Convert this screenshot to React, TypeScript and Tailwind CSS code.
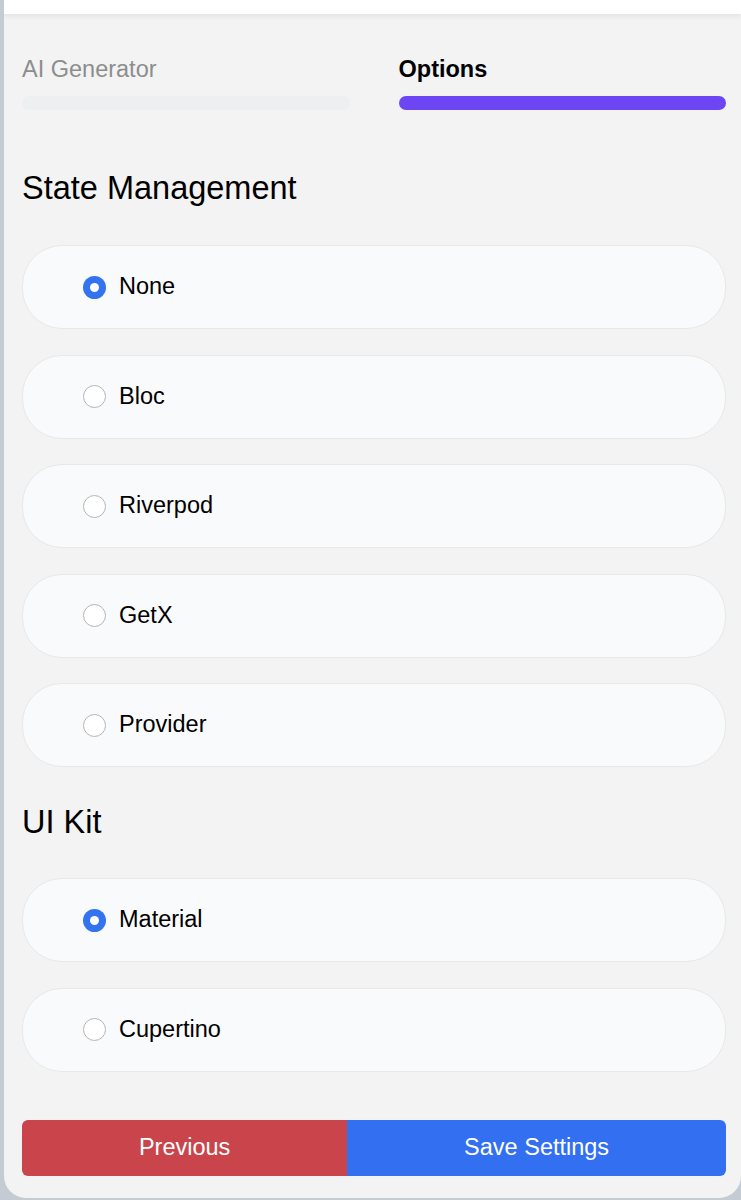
import { useState } from "react";

const stateOptions = ["None", "Bloc", "Riverpod", "GetX", "Provider"];
const uiKits = ["Material", "Cupertino"];

function RadioCard({
  label,
  checked,
  onSelect,
}: {
  label: string;
  checked: boolean;
  onSelect: () => void;
}) {
  return (
    <label
      onClick={onSelect}
      className="flex items-center h-[84px] pl-[60px] bg-[#f9fafb] border border-[#e8e8e9] rounded-[40px] cursor-pointer"
    >
      {checked ? (
        <span className="w-[23px] h-[23px] rounded-full bg-[#3373f0] flex items-center justify-center">
          <span className="w-[9px] h-[9px] rounded-full bg-white" />
        </span>
      ) : (
        <span className="w-[23px] h-[23px] rounded-full bg-white border-[1.5px] border-[#b5b5b5]" />
      )}
      <span className="ml-[13px] text-[23.5px] text-black leading-none">
        {label}
      </span>
    </label>
  );
}

export default function App() {
  const [stateMgmt, setStateMgmt] = useState("None");
  const [uiKit, setUiKit] = useState("Material");

  return (
    <div
      className="min-h-[1200px] bg-[#c4cbd2] pl-[4px]"
      style={{ fontFamily: '"Liberation Sans", Arial, sans-serif' }}
    >
      <div className="bg-[#f3f3f3] rounded-b-[22px] overflow-hidden">
        <div className="h-[14px] bg-white shadow-[0_2px_6px_rgba(0,0,0,0.08)]" />
        <div className="pl-[18px] pr-[15px] pt-[41px] pb-[22px]">
          {/* tabs */}
          <div className="grid grid-cols-2 gap-[49px]">
            <div>
              <div className="text-[23.5px] leading-[28px] text-[#8d8d8d]">
                AI Generator
              </div>
              <div className="mt-[13px] h-[14px] rounded-full bg-[#eeeff1]" />
            </div>
            <div>
              <div className="text-[23.5px] leading-[28px] font-bold text-black">
                Options
              </div>
              <div className="mt-[13px] h-[14px] rounded-full bg-[#6e45f2]" />
            </div>
          </div>

          <h2 className="mt-[59px] text-[32.5px] leading-[38px] text-black">
            State Management
          </h2>
          <div className="mt-[38px] flex flex-col gap-[25.5px]">
            {stateOptions.map((opt) => (
              <RadioCard
                key={opt}
                label={opt}
                checked={stateMgmt === opt}
                onSelect={() => setStateMgmt(opt)}
              />
            ))}
          </div>

          <h2 className="mt-[36px] text-[32.5px] leading-[38px] text-black">
            UI Kit
          </h2>
          <div className="mt-[37px] flex flex-col gap-[25.5px]">
            {uiKits.map((opt) => (
              <RadioCard
                key={opt}
                label={opt}
                checked={uiKit === opt}
                onSelect={() => setUiKit(opt)}
              />
            ))}
          </div>

          <div className="mt-[48px] flex h-[56px] rounded-[6px] overflow-hidden">
            <button className="grow bg-[#c9454b] text-white text-[23.5px]">
              Previous
            </button>
            <button className="grow bg-[#326ff1] text-white text-[23.5px]">
              Save Settings
            </button>
          </div>
        </div>
      </div>
    </div>
  );
}
